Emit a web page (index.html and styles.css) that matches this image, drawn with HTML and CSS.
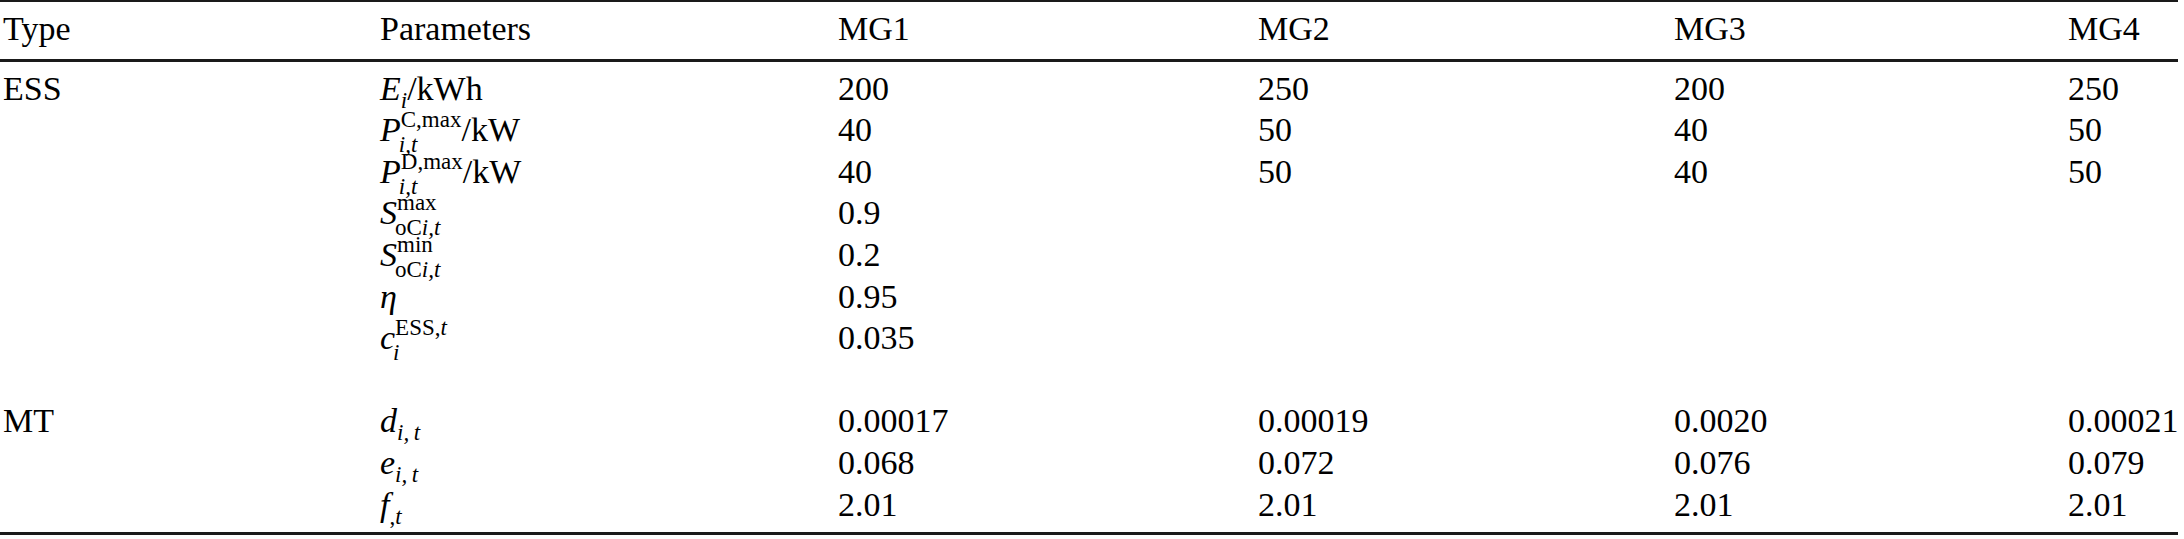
FILE: index.html
```html
<!DOCTYPE html>
<html lang="en">
<head>
<meta charset="utf-8">
<title>Parameters</title>
<link rel="stylesheet" href="styles.css">
</head>
<body>
<table class="params">
  <colgroup>
    <col class="c-type">
    <col class="c-par">
    <col class="c-mg1">
    <col class="c-mg2">
    <col class="c-mg3">
    <col class="c-mg4">
  </colgroup>
  <thead>
    <tr>
      <th class="first">Type</th>
      <th>Parameters</th>
      <th>MG1</th>
      <th>MG2</th>
      <th>MG3</th>
      <th>MG4</th>
    </tr>
  </thead>
  <tbody>
    <tr class="top-row">
      <td class="first">ESS</td>
      <td><span class="it">E</span><span class="sub it">i</span>/kWh</td>
      <td>200</td><td>250</td><td>200</td><td>250</td>
    </tr>
    <tr>
      <td class="first"></td>
      <td><span class="it">P</span><span class="ss"><span>C,max</span><span class="it lo">i,t</span></span>/kW</td>
      <td>40</td><td>50</td><td>40</td><td>50</td>
    </tr>
    <tr>
      <td class="first"></td>
      <td><span class="it">P</span><span class="ss"><span>D,max</span><span class="it lo">i,t</span></span>/kW</td>
      <td>40</td><td>50</td><td>40</td><td>50</td>
    </tr>
    <tr>
      <td class="first"></td>
      <td><span class="it">S</span><span class="ss"><span>max</span><span class="lo">oC<span class="it">i,t</span></span></span></td>
      <td>0.9</td><td></td><td></td><td></td>
    </tr>
    <tr>
      <td class="first"></td>
      <td><span class="it">S</span><span class="ss"><span>min</span><span class="lo">oC<span class="it">i,t</span></span></span></td>
      <td>0.2</td><td></td><td></td><td></td>
    </tr>
    <tr>
      <td class="first"></td>
      <td><span class="it">η</span></td>
      <td>0.95</td><td></td><td></td><td></td>
    </tr>
    <tr>
      <td class="first"></td>
      <td><span class="it">c</span><span class="ss"><span>ESS,<span class="it">t</span></span><span class="it lo">i</span></span></td>
      <td>0.035</td><td></td><td></td><td></td>
    </tr>
    <tr class="blank">
      <td class="first">&nbsp;</td><td></td><td></td><td></td><td></td><td></td>
    </tr>
    <tr>
      <td class="first">MT</td>
      <td><span class="it">d</span><span class="sub it">i,&#8201;t</span></td>
      <td>0.00017</td><td>0.00019</td><td>0.0020</td><td>0.00021</td>
    </tr>
    <tr>
      <td class="first"></td>
      <td><span class="it">e</span><span class="sub it">i,&#8201;t</span></td>
      <td>0.068</td><td>0.072</td><td>0.076</td><td>0.079</td>
    </tr>
    <tr class="last-row">
      <td class="first"></td>
      <td><span class="it">f</span><span class="sub">,<span class="it">t</span></span></td>
      <td>2.01</td><td>2.01</td><td>2.01</td><td>2.01</td>
    </tr>
  </tbody>
</table>
</body>
</html>
```

FILE: styles.css
```css
html, body {
  margin: 0;
  padding: 0;
  background: #ffffff;
}

.params {
  border-collapse: separate;
  border-spacing: 0;
  table-layout: fixed;
  width: 2178px;
  font-family: "Liberation Serif", "Times New Roman", serif;
  font-size: 34px;
  line-height: 41.6px;
  color: #000000;
}

.c-type { width: 380px; }
.c-par  { width: 458px; }
.c-mg1  { width: 420px; }
.c-mg2  { width: 416px; }
.c-mg3  { width: 394px; }
.c-mg4  { width: 110px; }

.params th,
.params td {
  padding: 0;
  text-align: left;
  font-weight: normal;
  vertical-align: baseline;
  white-space: nowrap;
  height: 41.6px;
}

.params .first {
  padding-left: 3px;
}

.params th {
  padding-top: 6px;
  padding-bottom: 9px;
  border-top: 2px solid #1a1a1a;
  border-bottom: 3px solid #1a1a1a;
}

.params .top-row td {
  padding-top: 6px;
}

.params .last-row td {
  padding-bottom: 7px;
  border-bottom: 3px solid #1a1a1a;
}

.it {
  font-style: italic;
}

.sub {
  font-size: 23px;
  line-height: 0;
  vertical-align: -8px;
}

.ss {
  display: inline-flex;
  flex-direction: column;
  font-size: 23px;
  line-height: 25px;
  vertical-align: 14px;
  margin-top: -8px;
  margin-bottom: -26px;
}

.ss .lo {
  margin-left: -2px;
}
```
